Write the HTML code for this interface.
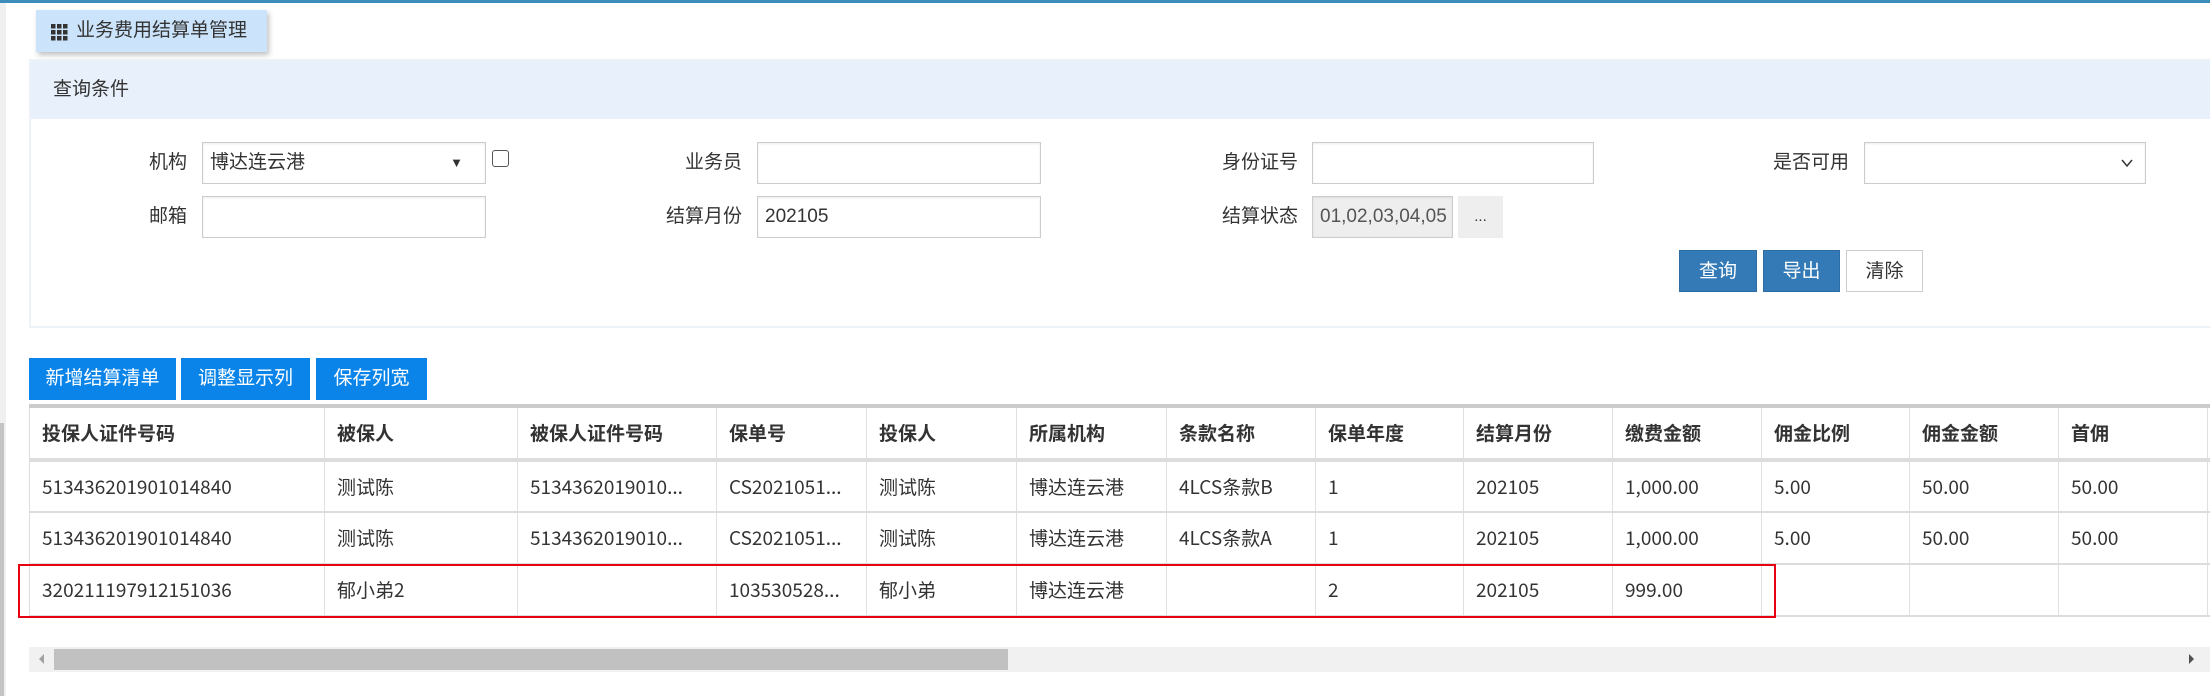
<!DOCTYPE html>
<html><head><meta charset="utf-8"><style>
*{box-sizing:border-box;margin:0;padding:0}
body{width:2210px;height:696px;overflow:hidden;background:#fff;font-family:"Liberation Sans","Noto Sans CJK SC",sans-serif;color:#333;position:relative}
.a{position:absolute}
.lbl{position:absolute;font-size:19px;text-align:right;width:140px;line-height:42px}
.inp{position:absolute;height:42px;border:1px solid #ccc;background:#fff;font-size:19px;line-height:40px;padding-left:7px;box-shadow:inset 0 1px 2px rgba(0,0,0,.08)}
.btn{position:absolute;height:42px;line-height:42px;text-align:center;font-size:19px;color:#fff}
table{border-collapse:collapse;table-layout:fixed;position:absolute;left:29px;top:404px;width:2300px;font-family:"Noto Sans CJK SC",sans-serif}
td,th{border-left:1px solid #e0e0e0;border-bottom:2px solid #ddd;font-size:19px;line-height:22px;vertical-align:middle;text-align:left;padding-left:12px;white-space:nowrap;overflow:hidden;height:52px;font-weight:normal}
th{font-weight:bold;height:54px;border-top:4px solid #ccc;border-bottom:4px solid #ddd}
td:first-child,th:first-child{border-left:1px solid #ddd}
</style></head><body>
<div class="a" style="left:0;top:0;width:2210px;height:3px;background:#3c8dbc"></div>
<div class="a" style="left:0;top:3px;width:6px;height:693px;background:#f0f0f0"></div>
<div class="a" style="left:0;top:423px;width:4px;height:273px;background:#c4c4c4"></div>

<div class="a" style="left:36px;top:10px;width:231px;height:42px;background:#cce4fb;box-shadow:2px 3px 5px rgba(0,0,0,.25)"></div>
<svg class="a" style="left:51px;top:24px" width="17" height="17"><g fill="#333"><rect x="0" y="0" width="4.5" height="4.5"/><rect x="6" y="0" width="4.5" height="4.5"/><rect x="12" y="0" width="4.5" height="4.5"/><rect x="0" y="6" width="4.5" height="4.5"/><rect x="6" y="6" width="4.5" height="4.5"/><rect x="12" y="6" width="4.5" height="4.5"/><rect x="0" y="12" width="4.5" height="4.5"/><rect x="6" y="12" width="4.5" height="4.5"/><rect x="12" y="12" width="4.5" height="4.5"/></g></svg>
<div class="a" style="left:76px;top:10px;line-height:42px;font-size:19px">业务费用结算单管理</div>

<div class="a" style="left:29px;top:59px;width:2190px;height:269px;border:2px solid #edf2f7;border-right:none"></div>
<div class="a" style="left:31px;top:61px;width:2180px;height:58px;background:#e8f1fb"></div>
<div class="a" style="left:53px;top:61px;line-height:58px;font-size:19px">查询条件</div>

<div class="lbl" style="left:47px;top:142px">机构</div>
<div class="inp" style="left:202px;top:142px;width:284px">博达连云港<span style="position:absolute;right:22px;font-size:13px">▼</span></div>
<div class="a" style="left:492px;top:150px;width:17px;height:17px;border:1.5px solid #555;border-radius:3px"></div>
<div class="lbl" style="left:602px;top:142px">业务员</div>
<div class="inp" style="left:757px;top:142px;width:284px"></div>
<div class="lbl" style="left:1158px;top:142px">身份证号</div>
<div class="inp" style="left:1312px;top:142px;width:282px"></div>
<div class="lbl" style="left:1709px;top:142px">是否可用</div>
<div class="inp" style="left:1864px;top:142px;width:282px"><svg style="position:absolute;right:12px;top:15px" width="12" height="10"><path d="M1 2 L6 8 L11 2" stroke="#333" stroke-width="1.5" fill="none"/></svg></div>

<div class="lbl" style="left:47px;top:196px">邮箱</div>
<div class="inp" style="left:202px;top:196px;width:284px"></div>
<div class="lbl" style="left:602px;top:196px">结算月份</div>
<div class="inp" style="left:757px;top:196px;width:284px">202105</div>
<div class="lbl" style="left:1158px;top:196px">结算状态</div>
<div class="inp" style="left:1312px;top:196px;width:141px;background:#eee;overflow:hidden;white-space:nowrap;color:#555">01,02,03,04,05</div>
<div class="a" style="left:1458px;top:196px;width:45px;height:42px;background:#eee;text-align:center;line-height:42px;font-size:15px">...</div>

<div class="btn" style="left:1679px;top:250px;width:78px;background:#337ab7;border:1px solid #2e6da4">查询</div>
<div class="btn" style="left:1763px;top:250px;width:77px;background:#337ab7;border:1px solid #2e6da4">导出</div>
<div class="btn" style="left:1846px;top:250px;width:77px;background:#fff;border:1px solid #ccc;color:#333">清除</div>

<div class="btn" style="left:29px;top:358px;width:147px;background:#0a84e8">新增结算清单</div>
<div class="btn" style="left:181px;top:358px;width:129px;background:#0a84e8">调整显示列</div>
<div class="btn" style="left:316px;top:358px;width:111px;background:#0a84e8">保存列宽</div>

<table>
<colgroup><col style="width:295px"><col style="width:193px"><col style="width:199px"><col style="width:150px"><col style="width:150px"><col style="width:150px"><col style="width:149px"><col style="width:148px"><col style="width:149px"><col style="width:149px"><col style="width:148px"><col style="width:149px"><col style="width:149px"><col style="width:122px"></colgroup>
<tr><th>投保人证件号码</th><th>被保人</th><th>被保人证件号码</th><th>保单号</th><th>投保人</th><th>所属机构</th><th>条款名称</th><th>保单年度</th><th>结算月份</th><th>缴费金额</th><th>佣金比例</th><th>佣金金额</th><th>首佣</th><th></th></tr>
<tr><td>513436201901014840</td><td>测试陈</td><td>5134362019010...</td><td>CS2021051...</td><td>测试陈</td><td>博达连云港</td><td>4LCS条款B</td><td>1</td><td>202105</td><td>1,000.00</td><td>5.00</td><td>50.00</td><td>50.00</td><td></td></tr>
<tr><td>513436201901014840</td><td>测试陈</td><td>5134362019010...</td><td>CS2021051...</td><td>测试陈</td><td>博达连云港</td><td>4LCS条款A</td><td>1</td><td>202105</td><td>1,000.00</td><td>5.00</td><td>50.00</td><td>50.00</td><td></td></tr>
<tr><td>320211197912151036</td><td>郁小弟2</td><td></td><td>103530528...</td><td>郁小弟</td><td>博达连云港</td><td></td><td>2</td><td>202105</td><td>999.00</td><td></td><td></td><td></td><td></td></tr>
</table>
<div class="a" style="left:18px;top:564px;width:1758px;height:54px;border:2.5px solid #e60012"></div>

<div class="a" style="left:29px;top:647px;width:2181px;height:25px;background:#f1f1f1"></div>
<div class="a" style="left:54px;top:649px;width:954px;height:21px;background:#c1c1c1"></div>
<svg class="a" style="left:37px;top:653px" width="8" height="12"><path d="M7 1 L2 6 L7 11Z" fill="#a3a3a3"/></svg>
<svg class="a" style="left:2188px;top:653px" width="8" height="12"><path d="M1 1 L6 6 L1 11Z" fill="#505050"/></svg>
</body></html>
